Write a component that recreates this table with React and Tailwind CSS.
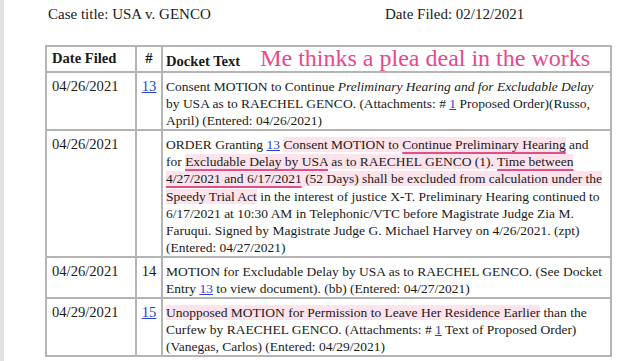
import React from 'react';

// docket sheet snippet with highlights
const Link = ({ children }) => (
  <span className="text-[#2a3fd1] underline decoration-[#2a3fd1]">{children}</span>
);

const Hl = ({ children }) => <span className="bg-[#fde3ec]">{children}</span>;

const Ul = ({ children }) => (
  <span className="bg-[#fde3ec] underline decoration-[#e0508a] decoration-[1.5px] underline-offset-[3px]">
    {children}
  </span>
);

const rows = [
  {
    date: '04/26/2021',
    num: <Link>13</Link>,
    lines: [
      <>Consent MOTION to Continue <i>Preliminary Hearing and for Excludable Delay</i></>,
      <>by USA as to RAECHEL GENCO. (Attachments: # <Link>1</Link> Proposed Order)(Russo,</>,
      <>April) (Entered: 04/26/2021)</>,
    ],
  },
  {
    date: '04/26/2021',
    num: null,
    lines: [
      <>
        ORDER Granting <Link>13</Link> <Hl>Consent MOTION to </Hl>
        <Ul>Continue Preliminary Hearing</Ul> and
      </>,
      <>
        for <Ul>Excludable Delay by USA</Ul>
        <Hl> as to RAECHEL GENCO (1). </Hl>
        <Ul>Time between</Ul>
      </>,
      <>
        <Ul>4/27/2021 and 6/17/2021</Ul>
        <Hl> (52 Days) shall be excluded from calculation under the</Hl>
      </>,
      <>
        <Hl>Speedy Trial Act</Hl> in the interest of justice X-T. Preliminary Hearing continued to
      </>,
      <>6/17/2021 at 10:30 AM in Telephonic/VTC before Magistrate Judge Zia M.</>,
      <>Faruqui. Signed by Magistrate Judge G. Michael Harvey on 4/26/2021. (zpt)</>,
      <>(Entered: 04/27/2021)</>,
    ],
  },
  {
    date: '04/26/2021',
    num: '14',
    lines: [
      <>MOTION for Excludable Delay by USA as to RAECHEL GENCO. (See Docket</>,
      <>Entry <Link>13</Link> to view document). (bb) (Entered: 04/27/2021)</>,
    ],
  },
  {
    date: '04/29/2021',
    num: <Link>15</Link>,
    lines: [
      <><Hl>Unopposed MOTION for Permission to Leave Her Residence Earlier</Hl> than the</>,
      <>Curfew by RAECHEL GENCO. (Attachments: # <Link>1</Link> Text of Proposed Order)</>,
      <>(Vanegas, Carlos) (Entered: 04/29/2021)</>,
    ],
  },
];

export default function App() {
  return (
    <div className="w-[640px] h-[361px] overflow-hidden bg-white flex font-['Liberation_Serif',serif] text-[#1a1a1a]">
      <div className="w-[4px] shrink-0 bg-[#e2e2e2]" />
      <div className="flex-1 pl-[41px] pt-[5px]">
        <div className="flex text-[15px] leading-[18px] h-[40px]">
          <div className="w-[340px] pl-[3px]">Case title: USA v. GENCO</div>
          <div>Date Filed: 02/12/2021</div>
        </div>
        <table className="w-[567px] table-fixed border-collapse text-[13.5px] leading-[17.1px]">
          <colgroup>
            <col className="w-[90px]" />
            <col className="w-[26px]" />
            <col />
          </colgroup>
          <thead>
            <tr className="h-[26px]">
              <th className="border-2 border-[#b4b4b4] px-[5px] text-left text-[14.6px] font-bold align-middle">
                Date Filed
              </th>
              <th className="border-2 border-[#b4b4b4] text-center text-[14.6px] font-bold align-middle">#</th>
              <th className="border-2 border-[#b4b4b4] pl-[3px] pr-0 text-left align-middle whitespace-nowrap">
                <span className="font-bold text-[14.6px]">Docket Text</span>
                <span className="ml-[20px] text-[24px] leading-[22px] font-normal text-[#e8478f]">
                  Me thinks a plea deal in the works
                </span>
              </th>
            </tr>
          </thead>
          <tbody>
            {rows.map((r, i) => (
              <tr key={i}>
                <td className="border-2 border-[#b4b4b4] px-[5px] pt-[5px] pb-0 align-top text-[14.6px]">
                  {r.date}
                </td>
                <td className="border-2 border-[#b4b4b4] pt-[5px] pb-0 text-center align-top text-[14.6px]">
                  {r.num}
                </td>
                <td className="border-2 border-[#b4b4b4] pl-[3px] pr-0 pt-[5px] pb-0 align-top whitespace-nowrap overflow-hidden">
                  {r.lines.map((l, j) => (
                    <div key={j}>{l}</div>
                  ))}
                </td>
              </tr>
            ))}
          </tbody>
        </table>
      </div>
    </div>
  );
}
